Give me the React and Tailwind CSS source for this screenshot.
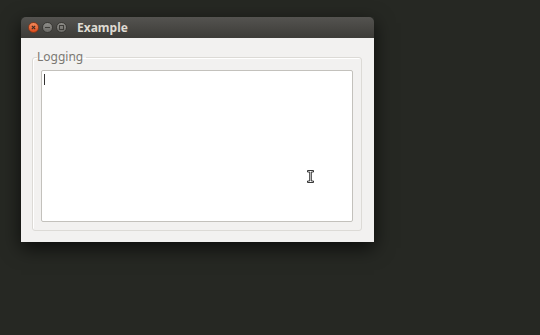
export default function App() {
  return (
    <div className="relative h-[335px] w-[540px] overflow-hidden bg-[#262823] pl-[21px] pt-[17px] font-['Noto_Sans',sans-serif]">
      <div className="flex h-[225px] w-[353px] flex-col shadow-[0_6px_18px_rgba(0,0,0,0.7)]">
        <div className="flex h-[21px] items-center rounded-t-[5px] bg-gradient-to-b from-[#545350] to-[#3d3c38] pl-[7px]">
          <div className="flex items-center gap-[3px]">
            <div className="flex h-[11px] w-[11px] items-center justify-center rounded-full border border-[#8a3a1c] bg-gradient-to-b from-[#f58a5a] to-[#df4a18]">
              <svg width="5" height="5" viewBox="0 0 6 6">
                <path d="M1 1L5 5M5 1L1 5" stroke="#3b2a22" strokeWidth="1.3" />
              </svg>
            </div>
            <div className="flex h-[11px] w-[11px] items-center justify-center rounded-full border border-[#3a3935] bg-gradient-to-b from-[#8e8d89] to-[#6c6b67]">
              <div className="h-[1.5px] w-[5px] bg-[#3e3d39]" />
            </div>
            <div className="flex h-[11px] w-[11px] items-center justify-center rounded-full border border-[#3a3935] bg-gradient-to-b from-[#8e8d89] to-[#6c6b67]">
              <div className="h-[5px] w-[5px] border border-[#3e3d39]" />
            </div>
          </div>
          <span className="ml-[10px] text-[12px] font-bold leading-none text-[#dfdbd2]">Example</span>
        </div>
        <div className="flex-1 bg-[#f2f1f0] px-[11px] pt-[12px]">
          <fieldset className="h-[181px] w-[330px] rounded-[3px] border border-[#dcdad6] px-[8px] pb-[8px] pt-[6px] shadow-[inset_1px_1px_0_#ffffff]">
            <legend className="ml-[-4px] pr-[3px] text-[12px] leading-[14px] text-[#7a7873]">Logging</legend>
            <div className="relative h-[152px] w-full rounded-[2px] border border-[#c3c1bc] bg-white">
              <div className="absolute left-[2px] top-[3px] h-[11px] w-px bg-[#333]" />
            </div>
          </fieldset>
        </div>
      </div>
      <svg className="absolute left-[307px] top-[170px]" width="7" height="13" viewBox="0 0 7 13">
        <path
          d="M0.5 0.5H6.5V2H4.3V11H6.5V12.5H0.5V11H2.7V2H0.5Z"
          fill="#fff"
          stroke="#222"
          strokeWidth="0.9"
        />
      </svg>
    </div>
  )
}
